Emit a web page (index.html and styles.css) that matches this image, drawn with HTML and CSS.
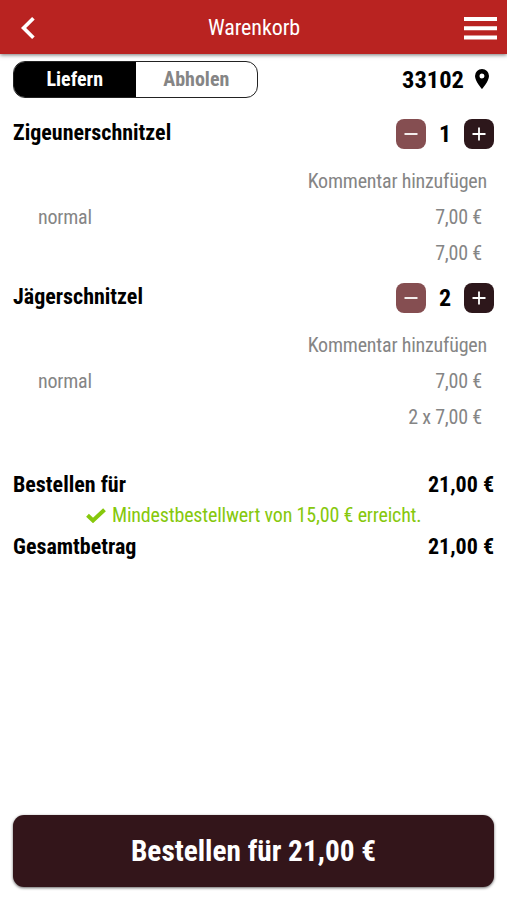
FILE: index.html
```html
<!DOCTYPE html>
<html lang="de">
<head>
<meta charset="utf-8">
<title>Warenkorb</title>
<link rel="stylesheet" href="styles.css">
</head>
<body>
<div class="app">
  <header class="bar">
    <svg class="back" viewBox="0 0 14 22"><path d="M12.400 1.300 2.600 11l9.800 9.700" fill="none" stroke="#fff" stroke-width="3.700"/></svg>
    <h1>Warenkorb</h1>
    <svg class="menu" viewBox="0 0 33 23"><path d="M0 2h33M0 11.200h33M0 20.400h33" stroke="#fff" stroke-width="4"/></svg>
  </header>
  <main>
    <section class="delivery">
      <div class="toggle"><span class="on">Liefern</span><span class="off">Abholen</span></div>
      <div class="zip"><span>33102</span><svg viewBox="0 0 14 20"><path fill-rule="evenodd" d="M7 0a7 7 0 0 0-7 7c0 5.200 7 13 7 13s7-7.800 7-13a7 7 0 0 0-7-7zm0 9.500a2.500 2.500 0 1 1 0-5 2.500 2.500 0 0 1 0 5z"/></svg></div>
    </section>
    <article class="item">
      <div class="head"><h2>Zigeunerschnitzel</h2>
        <button class="minus"><svg viewBox="0 0 14 14"><path d="M.5 7h13"/></svg></button><b>1</b><button class="plus"><svg viewBox="0 0 14 14"><path d="M.5 7h13M7 .5v13"/></svg></button>
      </div>
      <div class="row comment"><span>Kommentar hinzufügen</span></div>
      <div class="row"><span>normal</span><span>7,00 €</span></div>
      <div class="row sum"><span>7,00 €</span></div>
    </article>
    <article class="item">
      <div class="head"><h2>Jägerschnitzel</h2>
        <button class="minus"><svg viewBox="0 0 14 14"><path d="M.5 7h13"/></svg></button><b>2</b><button class="plus"><svg viewBox="0 0 14 14"><path d="M.5 7h13M7 .5v13"/></svg></button>
      </div>
      <div class="row comment"><span>Kommentar hinzufügen</span></div>
      <div class="row"><span>normal</span><span>7,00 €</span></div>
      <div class="row sum"><span>2 x 7,00 €</span></div>
    </article>
    <section class="totals">
      <div class="total"><span>Bestellen für</span><span>21,00 €</span></div>
      <div class="minimum"><svg viewBox="0 0 20 15"><path d="M1.500 7.300 7 12.500 18.500 1.700" fill="none" stroke="#86c80c" stroke-width="4"/></svg><span>Mindestbestellwert von 15,00 € erreicht.</span></div>
      <div class="total"><span>Gesamtbetrag</span><span>21,00 €</span></div>
    </section>
  </main>
  <button class="order"><span>Bestellen für 21,00 €</span></button>
</div>
</body>
</html>
```
FILE: styles.css
```css
* { box-sizing: border-box; }
body { margin: 0; background: #fff; color: #000; font-family: "Roboto Condensed", Roboto, sans-serif; font-stretch: 75%; }
h1, h2 { margin: 0; }
button { border: 0; padding: 0; font: inherit; font-stretch: 75%; }
svg { display: block; flex: none; }
span, h1, h2 { white-space: nowrap; }
.app { height: 900px; display: flex; flex-direction: column; }
.bar { height: 54px; padding: 2px 10px 0 21px; display: flex; align-items: center; justify-content: space-between; background: #b92321; color: #fff; box-shadow: 0 1px 4px rgba(0,0,0,.55); }
.bar h1 { font-size: 22px; font-weight: 450; letter-spacing: -.1px; margin: -2px 0 0 9px; }
.back { width: 14px; height: 22px; }
.menu { width: 33px; height: 23px; }
main { flex: 1; padding: 7px 13px 0; }
.delivery { height: 36px; margin-bottom: 22px; display: flex; justify-content: space-between; align-items: center; }
.toggle { width: 245px; height: 37px; display: flex; border: 1px solid #222; border-radius: 12px; overflow: hidden; font-size: 20px; font-weight: 700; line-height: 35px; text-align: center; }
.toggle span { flex: 1; }
.on { background: #000; color: #fff; }
.off { color: #858585; }
.zip { display: flex; align-items: center; gap: 11px; padding-right: 5px; font-size: 24.500px; font-weight: 700; }
.zip svg { width: 14px; height: 20px; }
.item { margin-bottom: 12px; }
.head { height: 30px; margin-bottom: 14px; display: flex; align-items: center; font-size: 22px; }
.head h2 { flex: 1; font-size: 22px; font-weight: 700; margin-top: -3px; }
.head b { width: 38px; text-align: center; font-size: 24px; }
.head button { width: 30px; height: 30px; border-radius: 8px; display: flex; align-items: center; justify-content: center; }
.head button svg { width: 14px; height: 14px; stroke: #fff; stroke-width: 1.800; }
.minus { background: #854e51; }
.plus { background: #2d171b; }
.row { height: 36px; padding: 0 12px 0 25px; display: flex; justify-content: space-between; align-items: center; font-size: 20px; letter-spacing: -.2px; color: #858585; }
.comment { justify-content: flex-end; padding-right: 7px; }
.sum { justify-content: flex-end; }
.totals { padding-top: 22px; }
.total { height: 31px; display: flex; justify-content: space-between; align-items: center; font-size: 22px; font-weight: 700; }
.minimum { height: 31px; padding: 0 0 1px 73px; display: flex; align-items: center; gap: 6px; font-size: 20px; letter-spacing: -.18px; color: #86c80c; }
.minimum svg { width: 20px; height: 15px; }
.order { height: 72px; margin: 0 13px 13px; border-radius: 11px; background: #33151a; color: #fff; font-size: 29.300px; font-weight: 700; box-shadow: 0 1px 3px rgba(0,0,0,.6); }
```
